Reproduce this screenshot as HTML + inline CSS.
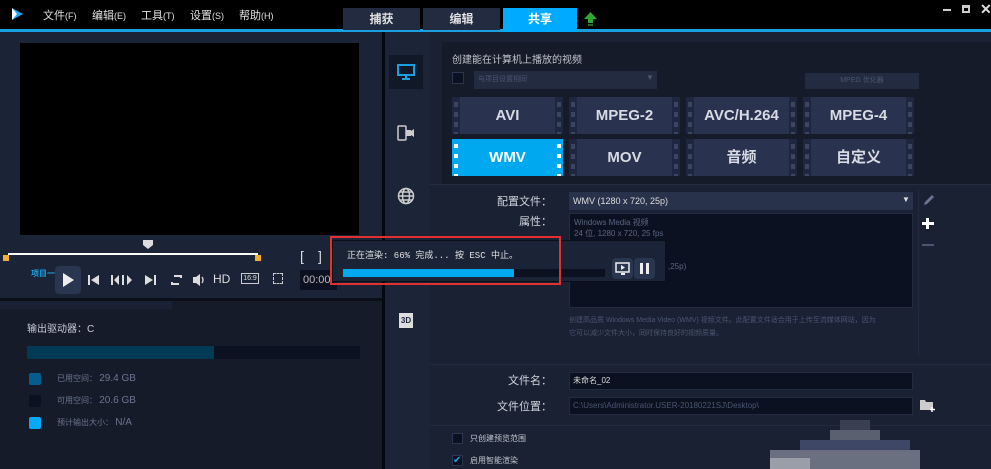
<!DOCTYPE html>
<html><head><meta charset="utf-8"><style>
*{margin:0;padding:0;box-sizing:border-box}
body{width:991px;height:469px;overflow:hidden;background:#171d2c;font-family:"Liberation Sans","Noto Sans CJK SC",sans-serif;position:relative;color:#c8ccd6}
.a{position:absolute}
.t{position:absolute;white-space:nowrap}
.fmt{position:absolute;width:111px;height:37px;background:#293350;color:#d8dbe3;font-size:15px;font-weight:bold;text-align:center;line-height:37px}
.fmt:before,.fmt:after{content:"";position:absolute;top:0;bottom:0;width:8px;background:#1f2740 repeating-linear-gradient(#1f2740 0 3px,#3a4560 3px 8px,#1f2740 8px 10px);background-size:4px 10px;background-repeat:repeat-y;background-position:2px 2px}
.fmt:before{left:0}.fmt:after{right:0}
.fmt.sel{background:#00a8f0;color:#fff}
.fmt.sel:before,.fmt.sel:after{background:#00a8f0 repeating-linear-gradient(#00a8f0 0 3px,#fff 3px 7px,#00a8f0 7px 10px);background-size:4px 10px;background-repeat:repeat-y;background-position:2px 2px}
.lbl{font-size:11px;color:#d0d4dc;text-align:right;width:100px}
</style></head><body>
<div class="a" style="left:0;top:0;width:991px;height:30px;background:#000"></div>
<div class="a" style="left:0;top:29px;width:991px;height:3px;background:#1aa0e0"></div>
<svg class="a" style="left:11px;top:7px" width="13" height="14"><path d="M1 1 L12 7 L1 13 Z" fill="#19a8f0"/><path d="M1 1 L6 7 L1 13Z" fill="#fff"/></svg>
<div class="t" style="left:43px;top:7px;font-size:11px;color:#e0e0e0">文件<span style="font-size:9px">(F)</span></div>
<div class="t" style="left:92px;top:7px;font-size:11px;color:#e0e0e0">编辑<span style="font-size:9px">(E)</span></div>
<div class="t" style="left:141px;top:7px;font-size:11px;color:#e0e0e0">工具<span style="font-size:9px">(T)</span></div>
<div class="t" style="left:190px;top:7px;font-size:11px;color:#e0e0e0">设置<span style="font-size:9px">(S)</span></div>
<div class="t" style="left:239px;top:7px;font-size:11px;color:#e0e0e0">帮助<span style="font-size:9px">(H)</span></div>
<div class="a" style="left:343px;top:8px;width:77px;height:22px;background:#222b40;color:#e0e0e0;font-size:12px;font-weight:bold;text-align:center;line-height:22px">捕获</div>
<div class="a" style="left:423px;top:8px;width:77px;height:22px;background:#222b40;color:#e0e0e0;font-size:12px;font-weight:bold;text-align:center;line-height:22px">编辑</div>
<div class="a" style="left:503px;top:8px;width:74px;height:24px;background:#00aaff;color:#fff;font-size:12px;font-weight:bold;text-align:center;line-height:22px">共享</div>
<svg class="a" style="left:584px;top:12px" width="13" height="14"><path d="M6.5 0 L13 7 L9 7 L9 11 L4 11 L4 7 L0 7Z" fill="#2ea82e"/><rect x="4" y="12" width="5" height="2" fill="#1d6d1d"/></svg>
<div class="a" style="left:943px;top:9px;width:8px;height:2px;background:#ccc"></div>
<div class="a" style="left:962px;top:5px;width:8px;height:8px;border:2px solid #ccc;border-top-width:3px"></div>
<div class="t" style="left:980px;top:1px;font-size:14px;color:#ddd;font-weight:bold">✕</div>

<div class="a" style="left:0;top:32px;width:382px;height:266px;background:#1b2337"></div>
<div class="a" style="left:20px;top:43px;width:339px;height:192px;background:#000"></div>
<div class="a" style="left:8px;top:253px;width:250px;height:2px;background:#fff"></div>
<div class="a" style="left:3px;top:255px;width:6px;height:6px;background:#f0b030"></div>
<div class="a" style="left:255px;top:255px;width:6px;height:6px;background:#f0b030"></div>
<svg class="a" style="left:143px;top:240px" width="11" height="10"><path d="M0 0H10V5L5 9L0 5Z" fill="#ddd"/></svg>
<div class="t" style="left:300px;top:248px;font-size:14px;color:#ddd">[</div>
<div class="t" style="left:318px;top:248px;font-size:14px;color:#ddd">]</div>
<div class="t" style="left:31px;top:268px;font-size:8px;color:#1aa0e0;font-weight:bold">项目一</div>
<div class="a" style="left:55px;top:266px;width:26px;height:28px;background:#2a3550;border-radius:4px"></div>
<svg class="a" style="left:62px;top:273px" width="12" height="14"><path d="M1 0L12 7L1 14Z" fill="#eee"/></svg>
<svg class="a" style="left:88px;top:273px" width="120" height="14" fill="#ddd"><rect x="0" y="2" width="2" height="10"/><path d="M11 2V12L3 7Z"/><rect x="23" y="2" width="2" height="10"/><path d="M31 2V12L26 7Z"/><rect x="34" y="2" width="2" height="10"/><path d="M39 2V12L44 7Z"/><path d="M57 2V12L65 7Z"/><rect x="66" y="2" width="2" height="10"/><path d="M86 3H93V5M91 11H84V9" fill="none" stroke="#ddd" stroke-width="2"/><path d="M105 4H108L112 1V13L108 10H105Z"/><path d="M114 4Q116 7 114 10" fill="none" stroke="#ddd" stroke-width="1.3"/></svg>
<div class="t" style="left:213px;top:272px;font-size:12px;color:#ddd">HD</div>
<div class="a" style="left:241px;top:273px;width:18px;height:11px;border:1px solid #ccc;font-size:7px;color:#ddd;line-height:9px;text-align:center">16:9</div>
<div class="a" style="left:273px;top:273px;width:10px;height:11px;border:1px dashed #ccc"></div>
<div class="a" style="left:300px;top:270px;width:37px;height:20px;background:#0b1120;font-size:11px;color:#bbb;line-height:20px;padding-left:3px">00:00</div>
<div class="a" style="left:0;top:298px;width:382px;height:3px;background:#0b0f18"></div>
<div class="a" style="left:0;top:301px;width:382px;height:168px;background:#151b29"></div>
<div class="a" style="left:0;top:301px;width:172px;height:8px;background:#1a2134"></div>
<div class="t" style="left:27px;top:320px;font-size:10px;color:#c8ccd6">输出驱动器：C</div>
<div class="a" style="left:27px;top:346px;width:333px;height:13px;background:#0b1120"></div>
<div class="a" style="left:27px;top:346px;width:187px;height:13px;background:#013a55"></div>
<div class="a" style="left:29px;top:373px;width:12px;height:12px;background:#045d8e;border-radius:2px"></div>
<div class="a" style="left:29px;top:395px;width:12px;height:12px;background:#0b1120;border-radius:2px"></div>
<div class="a" style="left:29px;top:417px;width:12px;height:12px;background:#00aaff;border-radius:2px"></div>
<div class="t" style="left:57px;top:373px;font-size:8px;color:#6b7590">已用空间： <span style="font-size:10px">29.4 GB</span></div>
<div class="t" style="left:57px;top:395px;font-size:8px;color:#6b7590">可用空间： <span style="font-size:10px">20.6 GB</span></div>
<div class="t" style="left:57px;top:417px;font-size:8px;color:#6b7590">预计输出大小： <span style="font-size:10px">N/A</span></div>

<div class="a" style="left:382px;top:32px;width:3px;height:437px;background:#05080e"></div>
<div class="a" style="left:385px;top:32px;width:45px;height:437px;background:#1c2438"></div>
<div class="a" style="left:389px;top:55px;width:34px;height:34px;background:#111827"></div>
<svg class="a" style="left:397px;top:64px" width="18" height="16"><rect x="1" y="1" width="16" height="10" fill="none" stroke="#1aa0e0" stroke-width="2"/><rect x="8" y="11" width="2" height="3" fill="#1aa0e0"/><rect x="5" y="14" width="8" height="2" fill="#1aa0e0"/></svg>
<svg class="a" style="left:397px;top:125px" width="18" height="16"><rect x="1" y="1" width="8" height="14" rx="1" fill="none" stroke="#ccc" stroke-width="1.5"/><rect x="9" y="5" width="5" height="6" fill="#ccc"/><path d="M14 6L17 4V12L14 10Z" fill="#ccc"/></svg>
<svg class="a" style="left:397px;top:187px" width="18" height="18"><g fill="none" stroke="#ccc" stroke-width="1.5"><circle cx="9" cy="9" r="7.5"/><ellipse cx="9" cy="9" rx="3.5" ry="7.5"/><line x1="1.5" y1="9" x2="16.5" y2="9"/><line x1="3" y1="5" x2="15" y2="5"/><line x1="3" y1="13" x2="15" y2="13"/></g></svg>
<div class="a" style="left:399px;top:313px;width:14px;height:15px;background:#ddd;color:#1c2438;font-size:8px;font-weight:bold;line-height:15px;text-align:center">3D</div>

<div class="a" style="left:430px;top:32px;width:561px;height:437px;background:#1a2133"></div>
<div class="a" style="left:442px;top:42px;width:549px;height:143px;background:#151b29"></div>
<div class="t" style="left:452px;top:51px;font-size:10px;color:#c0c4cc">创建能在计算机上播放的视频</div>
<div class="a" style="left:452px;top:72px;width:12px;height:12px;background:#0b1120;border:1px solid #2a3550"></div>
<div class="a" style="left:474px;top:71px;width:183px;height:18px;background:#222b40;font-size:7px;color:#4a5570;line-height:18px;padding-left:4px">与项目设置相同</div>
<div class="t" style="left:646px;top:73px;font-size:8px;color:#4a5570">▼</div>
<div class="a" style="left:805px;top:73px;width:114px;height:16px;background:#222b40;font-size:7px;color:#4a5570;line-height:16px;text-align:center">MPEG 优化器</div>
<div class="fmt" style="left:452px;top:97px">AVI</div>
<div class="fmt" style="left:569px;top:97px">MPEG-2</div>
<div class="fmt" style="left:686px;top:97px">AVC/H.264</div>
<div class="fmt" style="left:803px;top:97px">MPEG-4</div>
<div class="fmt sel" style="left:452px;top:139px">WMV</div>
<div class="fmt" style="left:569px;top:139px">MOV</div>
<div class="fmt" style="left:686px;top:139px">音频</div>
<div class="fmt" style="left:803px;top:139px">自定义</div>
<div class="a" style="left:430px;top:184px;width:561px;height:1px;background:#232b3f"></div>
<div class="t lbl" style="left:452px;top:193px">配置文件：</div>
<div class="a" style="left:569px;top:192px;width:344px;height:18px;background:#28324a;font-size:9px;color:#ddd;line-height:18px;padding-left:4px">WMV (1280 x 720, 25p)</div>
<div class="t" style="left:902px;top:195px;font-size:8px;color:#ddd">▼</div>
<div class="t lbl" style="left:452px;top:213px">属性：</div>
<div class="a" style="left:569px;top:213px;width:344px;height:95px;background:#0b1120;border:1px solid #222b40;font-size:8px;color:#5a6580;padding:3px 4px;line-height:11px">Windows Media 视频<br>24 位, 1280 x 720, 25 fps</div>
<div class="t" style="left:668px;top:262px;font-size:8px;color:#5a6580">,25p)</div>
<div class="a" style="left:918px;top:190px;width:1px;height:165px;background:#232b3f"></div>
<svg class="a" style="left:922px;top:193px" width="14" height="14"><path d="M2 12L3 9L10 2L12 4L5 11Z" fill="#6b7590"/></svg>
<div class="a" style="left:922px;top:222px;width:12px;height:3px;background:#fff"></div>
<div class="a" style="left:926px;top:218px;width:3px;height:11px;background:#fff"></div>
<div class="a" style="left:922px;top:244px;width:12px;height:2px;background:#4a5570"></div>
<div class="t" style="left:569px;top:314px;font-size:7px;color:#4a5570;line-height:13px">创建高品质 Windows Media Video (WMV) 视频文件。此配置文件适合用于上传至流媒体网站，因为<br>它可以减少文件大小，同时保持良好的视频质量。</div>
<div class="a" style="left:430px;top:364px;width:561px;height:1px;background:#232b3f"></div>
<div class="t lbl" style="left:452px;top:372px">文件名：</div>
<div class="a" style="left:569px;top:372px;width:344px;height:18px;background:#0b1120;border:1px solid #222b40;font-size:8px;color:#ddd;line-height:16px;padding-left:3px">未命名_02</div>
<div class="t lbl" style="left:452px;top:398px">文件位置：</div>
<div class="a" style="left:569px;top:397px;width:344px;height:18px;background:#0b1120;border:1px solid #222b40;font-size:8px;color:#4a5570;line-height:16px;padding-left:3px">C:\Users\Administrator.USER-20180221SJ\Desktop\</div>
<svg class="a" style="left:920px;top:398px" width="16" height="14"><path d="M0 2H5L6 4H13V12H0Z" fill="#ccc"/><path d="M12 9V14M10 11.5H15" stroke="#fff" stroke-width="1.5"/></svg>
<div class="a" style="left:430px;top:425px;width:561px;height:1px;background:#232b3f"></div>
<div class="a" style="left:452px;top:433px;width:11px;height:11px;background:#0b1120;border:1px solid #2a3550"></div>
<div class="t" style="left:470px;top:433px;font-size:8px;color:#c0c4cc">只创建预览范围</div>
<div class="a" style="left:452px;top:455px;width:11px;height:11px;background:#0b1120;border:1px solid #2a3550;color:#1aa0e0;font-size:10px;line-height:9px">✔</div>
<div class="t" style="left:470px;top:455px;font-size:8px;color:#c0c4cc">启用智能渲染</div>
<div class="a" style="left:840px;top:420px;width:30px;height:10px;background:#3a4052"></div>
<div class="a" style="left:830px;top:430px;width:50px;height:10px;background:#5a6070"></div>
<div class="a" style="left:800px;top:440px;width:110px;height:10px;background:#3e4866"></div>
<div class="a" style="left:770px;top:450px;width:150px;height:19px;background:#6a7080"></div>
<div class="a" style="left:770px;top:458px;width:40px;height:11px;background:#9a9ea8"></div>

<div class="a" style="left:332px;top:240px;width:334px;height:42px;background:#1b2336;border:1px solid #0b0f18"></div>
<div class="t" style="left:347px;top:248px;font-size:9px;color:#e0e0e0;font-family:'Liberation Mono','Noto Sans CJK SC',monospace">正在渲染: 66% 完成... 按 ESC 中止。</div>
<div class="a" style="left:343px;top:269px;width:262px;height:8px;background:#0b1120"></div>
<div class="a" style="left:343px;top:269px;width:171px;height:8px;background:#00a8ee"></div>
<div class="a" style="left:612px;top:258px;width:21px;height:21px;background:#2a3550;border-radius:4px"></div>
<svg class="a" style="left:615px;top:262px" width="15" height="13"><rect x="1" y="1" width="13" height="9" fill="none" stroke="#eee" stroke-width="1.5"/><path d="M6 3L10 5.5L6 8Z" fill="#eee"/><rect x="6" y="11" width="4" height="2" fill="#eee"/></svg>
<div class="a" style="left:634px;top:258px;width:21px;height:21px;background:#2a3550;border-radius:4px"></div>
<div class="a" style="left:640px;top:263px;width:3px;height:11px;background:#eee"></div>
<div class="a" style="left:646px;top:263px;width:3px;height:11px;background:#eee"></div>
<div class="a" style="left:330px;top:236px;width:231px;height:49px;border:2px solid #e03030"></div>
</body></html>
